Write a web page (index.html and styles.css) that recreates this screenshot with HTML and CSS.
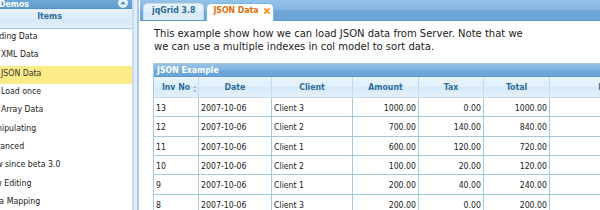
FILE: index.html
```html
<!DOCTYPE html>
<html>
<head>
<meta charset="utf-8">
<link rel="stylesheet" href="styles.css">
</head>
<body>
<div class="layout">
  <aside class="side">
    <div class="side-head">
      <span class="side-title">Demos</span>
      <svg class="collapse" viewBox="0 0 10 10" width="10" height="10"><circle cx="5" cy="5" r="5" fill="#e3eff9"/><path d="M2.4 6.3 L5 3.3 L7.6 6.3 Z" fill="#4a8ac4"/></svg>
    </div>
    <div class="tree-head">Items</div>
    <ul class="tree">
      <li class="node top">Loading Data</li>
      <li class="node child">XML Data</li>
      <li class="node child selected">JSON Data</li>
      <li class="node child">Load once</li>
      <li class="node child">Array Data</li>
      <li class="node top">Manipulating</li>
      <li class="node top">Advanced</li>
      <li class="node top">New since beta 3.0</li>
      <li class="node top">Row Editing</li>
      <li class="node top">Data Mapping</li>
    </ul>
  </aside>
  <div class="splitter"></div>
  <main class="main">
    <div class="tabs">
      <div class="tab">jqGrid 3.8</div>
      <div class="tab active">JSON Data<svg class="close" viewBox="0 0 6 6" width="6" height="6"><path d="M1 1 L5 5 M5 1 L1 5" stroke="#f0900c" stroke-width="1.7" stroke-linecap="square"/></svg></div>
    </div>
    <div class="panel">
      <p class="desc">This example show how we can load JSON data from Server. Note that we<br>we can use a multiple indexes in col model to sort data.</p>
      <div class="grid">
        <div class="caption">JSON Example</div>
        <div class="row head">
          <div class="cell">Inv No<svg class="sort" viewBox="0 0 4 8" width="4" height="8"><path d="M0 3 L2 0.5 L4 3 Z M0 5 L2 7.5 L4 5 Z" fill="#a9bccd"/></svg></div>
          <div class="cell">Date</div>
          <div class="cell">Client</div>
          <div class="cell">Amount</div>
          <div class="cell">Tax</div>
          <div class="cell">Total</div>
          <div class="cell">Notes</div>
        </div>
        <div class="row">
          <div class="cell">13</div><div class="cell">2007-10-06</div><div class="cell">Client 3</div><div class="cell num">1000.00</div><div class="cell num">0.00</div><div class="cell num">1000.00</div><div class="cell"></div>
        </div>
        <div class="row">
          <div class="cell">12</div><div class="cell">2007-10-06</div><div class="cell">Client 2</div><div class="cell num">700.00</div><div class="cell num">140.00</div><div class="cell num">840.00</div><div class="cell"></div>
        </div>
        <div class="row">
          <div class="cell">11</div><div class="cell">2007-10-06</div><div class="cell">Client 1</div><div class="cell num">600.00</div><div class="cell num">120.00</div><div class="cell num">720.00</div><div class="cell"></div>
        </div>
        <div class="row">
          <div class="cell">10</div><div class="cell">2007-10-06</div><div class="cell">Client 2</div><div class="cell num">100.00</div><div class="cell num">20.00</div><div class="cell num">120.00</div><div class="cell"></div>
        </div>
        <div class="row">
          <div class="cell">9</div><div class="cell">2007-10-06</div><div class="cell">Client 1</div><div class="cell num">200.00</div><div class="cell num">40.00</div><div class="cell num">240.00</div><div class="cell"></div>
        </div>
        <div class="row">
          <div class="cell">8</div><div class="cell">2007-10-06</div><div class="cell">Client 3</div><div class="cell num">200.00</div><div class="cell num">0.00</div><div class="cell num">200.00</div><div class="cell"></div>
        </div>
      </div>
    </div>
  </main>
</div>
</body>
</html>
```
FILE: styles.css
```css
* { box-sizing: border-box; }
html, body { margin: 0; padding: 0; }
body {
  width: 600px;
  height: 210px;
  overflow: hidden;
  background: #fff;
  font-family: "DejaVu Sans Condensed", "DejaVu Sans", sans-serif;
  font-size: 8.7px;
  color: #222;
}
.layout { display: flex; height: 210px; }

/* left pane */
.side { flex: none; width: 165px; margin-left: -33px; background: #fff; }
.side-head {
  height: 9px;
  display: flex;
  justify-content: space-between;
  padding: 0 4px 0 32px;
  background: linear-gradient(#70a8d9, #5c9ccc);
  border-bottom: 1px solid #4f93cf;
  color: #fff;
  font-weight: bold;
  line-height: 8px;
}
.collapse { flex: none; margin-top: -2px; }
.tree-head {
  height: 20px;
  border-bottom: 1px solid #a6c9e2;
  background: linear-gradient(#e6f1fb, #dcecfa 50%, #d4e7f8 51%, #e2effb);
  color: #2e6e9e;
  font-weight: bold;
  text-align: center;
  line-height: 15px;
}
.tree { list-style: none; margin: 0; padding: 0; }
.node { height: 18.33px; line-height: 15.33px; white-space: nowrap; }
.node.top { padding-left: 18.5px; }
.node.child { padding-left: 34px; }
.node.selected { background: #fbec88; color: #363636; }

.splitter {
  flex: none;
  width: 7px;
  background: linear-gradient(to right, #c8dcee 0 2px, #e2eef9 2px 5px, #a9cae6 5px 7px);
}

/* right pane */
.main { flex: 1; min-width: 0; padding-left: 1px; }
.tabs {
  height: 21px;
  display: flex;
  align-items: flex-end;
  gap: 2px;
  padding-left: 3px;
  background: linear-gradient(#95c2e7, #86b7e2 45%, #70a8d9 55%, #6aa4d6);
  border-bottom: 1px solid #5b9bd1;
}
.tab {
  height: 17px;
  padding: 0 8px;
  border: 1px solid #c5dbec;
  border-bottom: 0;
  border-radius: 5px 5px 0 0;
  background: linear-gradient(#eaf4fc, #dfeffc 50%, #d5e8f8 51%, #e0eefb);
  color: #2e6e9e;
  font-weight: bold;
  line-height: 13px;
  white-space: nowrap;
  display: flex;
  align-items: flex-start;
}
.tab.active {
  height: 18px;
  margin-bottom: -1px;
  padding: 0 3px 0 6px;
  background: #fff;
  border-color: #79b7e7;
  color: #e17009;
}
.close { flex: none; margin: 4px 0 0 5px; }

.panel { padding: 6px 0 0 13px; }
.desc {
  margin: 0 0 10px 1px;
  font-family: "DejaVu Sans", sans-serif;
  font-size: 10px;
  line-height: 13px;
  color: #222;
  white-space: nowrap;
}

.grid { width: 521px; border: 1px solid #a6c9e2; border-bottom: 0; }
.caption {
  height: 13px;
  padding: 1px 0 0 3px;
  line-height: 11px;
  background: linear-gradient(#93c0e6, #84b6e1 45%, #6fa7d8 55%, #6aa4d6);
  border-bottom: 1px solid #5b9bd1;
  color: #fff;
  font-weight: bold;
}
.row {
  display: grid;
  grid-template-columns: 45px 73px 81px 66px 65px 66px 123px;
  height: 19.33px;
  border-bottom: 1px solid #a6c9e2;
  background: #fff;
}
.cell {
  border-right: 1px solid #a6c9e2;
  padding: 2px 2px 0;
  line-height: 17px;
  white-space: nowrap;
  overflow: hidden;
}
.cell.num { text-align: right; }
.row.head {
  height: 21px;
  background: linear-gradient(#eaf4fc, #dfeffc 50%, #d6e9f9 51%, #e4f0fb);
  border-bottom-color: #c5dbec;
}
.row.head .cell {
  position: relative;
  padding: 0;
  line-height: 20px;
  text-align: center;
  font-weight: bold;
  color: #2e6e9e;
  border-right-color: #c5dbec;
}
.sort { position: absolute; right: 1px; top: 8px; }
```
